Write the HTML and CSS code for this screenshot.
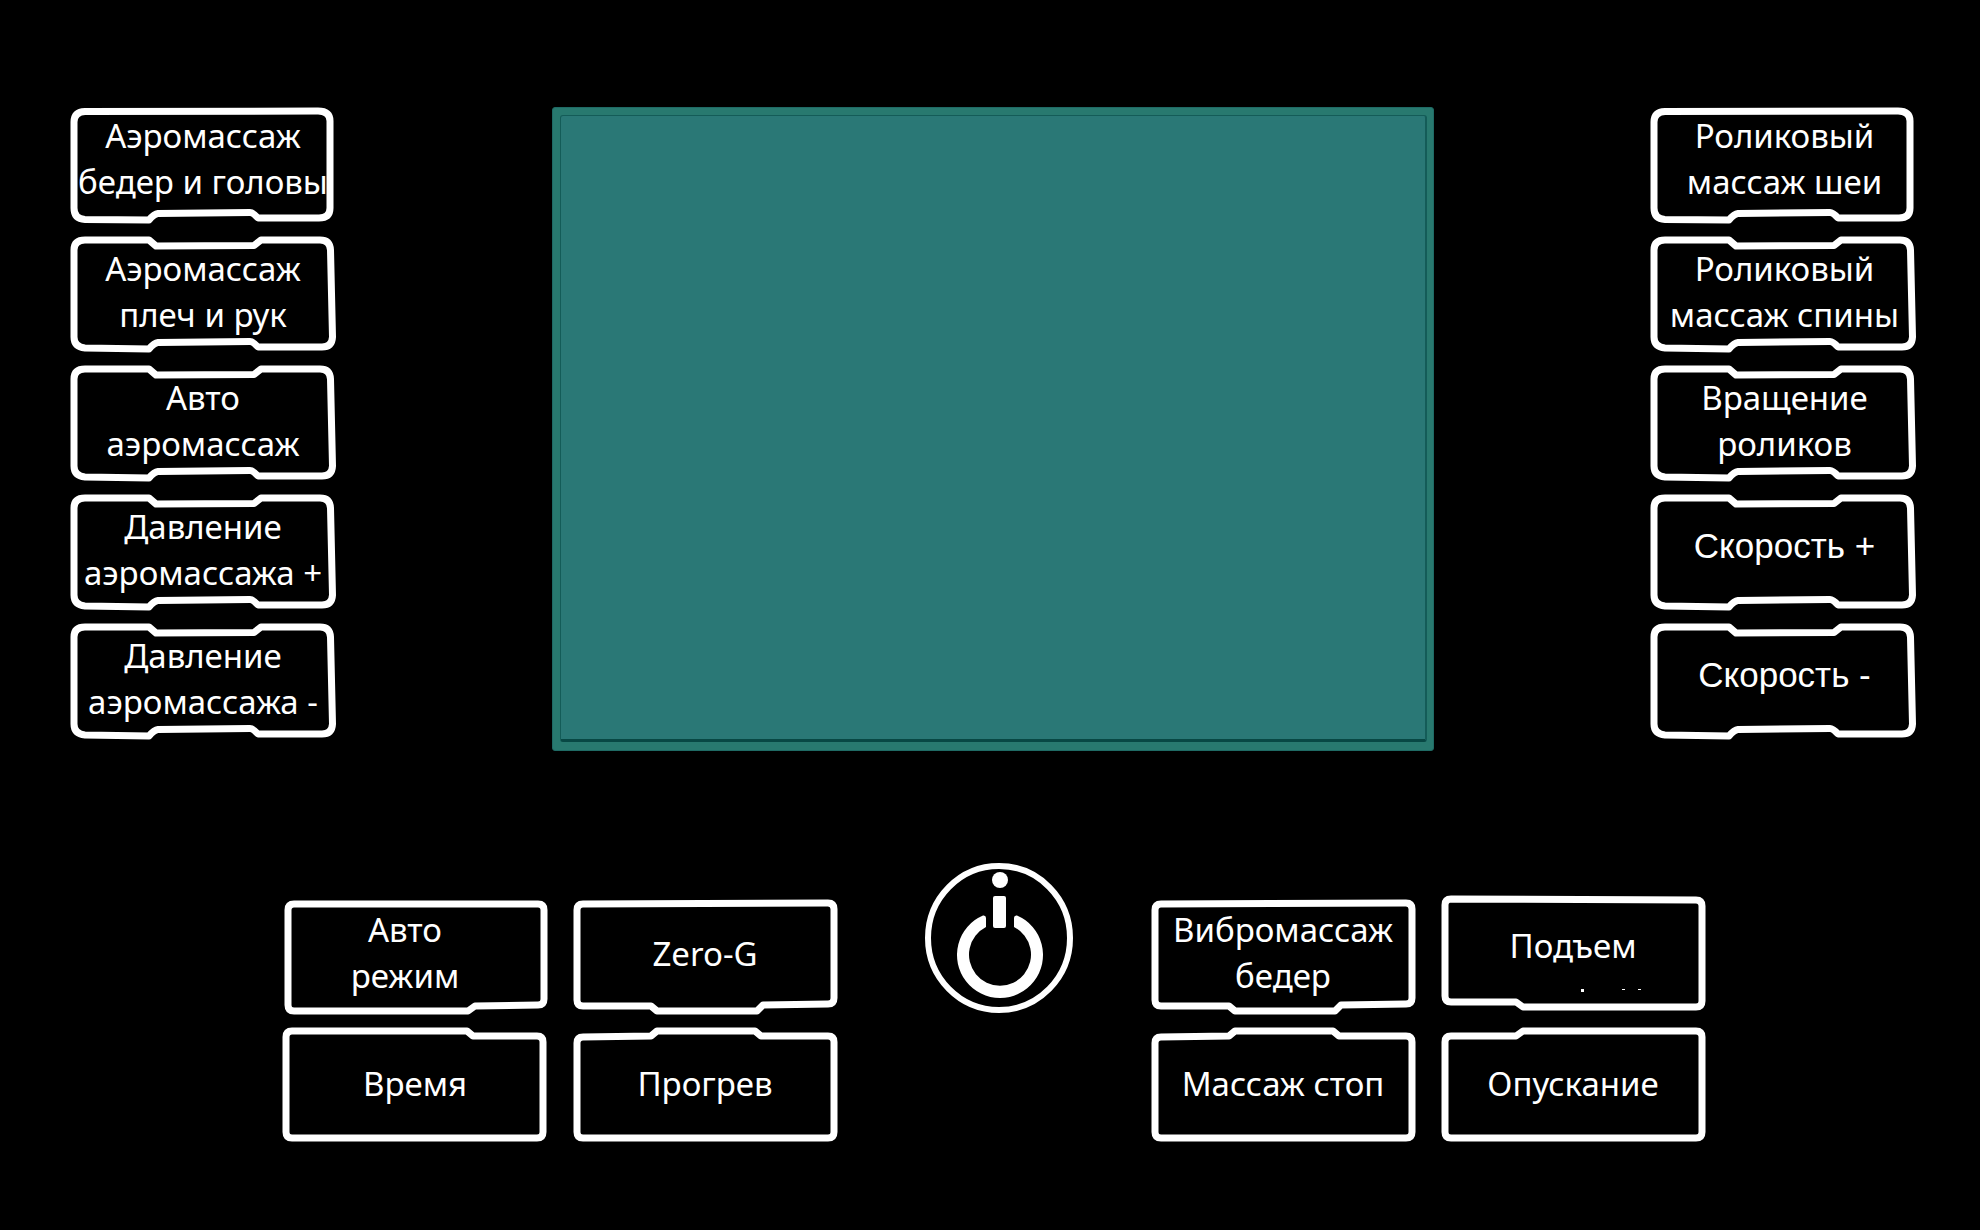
FILE: index.html
```html
<!DOCTYPE html>
<html lang="ru">
<head>
<meta charset="utf-8">
<title>Пульт массажного кресла</title>
<meta name="viewport" content="width=device-width, initial-scale=1">
<link rel="stylesheet" href="styles.css">
</head>
<body>
<svg class="sprite" aria-hidden="true">
  <symbol id="side-first" viewBox="0 0 266 117">
    <path d="M15 4.5 248 4Q260 4 260 14V101Q260 111 249 111H188Q183 105.5 180 105.5L88 106.5Q84 107 79 113L15 112.500Q4 112 4 101V15Q4 5 15 4.500Z"/>
  </symbol>
  <symbol id="side" viewBox="0 0 266 117">
    <path d="M15 4H79L86 10 184 9.500 191 4H250Q260 4 260.500 14L262.500 101Q262 111 252 111H188Q183 105.500 180 105.500L88 106.500Q84 107 79 113L15 112Q4 111 4 101V14Q4 4 15 4Z"/>
  </symbol>
  <symbol id="tab-left-up" viewBox="0 0 266 120">
    <path d="M12 9H256Q262 9 262 15V104Q262 110 256 110L193 111 186 116H12Q6 116 6 110V15Q6 9 12 9Z"/>
  </symbol>
  <symbol id="tab-left-down" viewBox="0 0 266 115">
    <path d="M10 4H185L191 9H255Q261 9 261 15V105Q261 111 255 111H10Q4 111 4 105V10Q4 4 10 4Z"/>
  </symbol>
  <symbol id="tab-mid-up" viewBox="0 0 266 120">
    <path d="M11 9 256 8Q262 8 262 14V103Q262 109 256 109L191 110 185 116H85L79 111H11Q5 111 5 105V15Q5 9 11 9Z"/>
  </symbol>
  <symbol id="tab-mid-down" viewBox="0 0 266 115">
    <path d="M11 10 79 9 85 4H183L189 9H256Q262 9 262 15V105Q262 111 256 111H11Q5 111 5 105V16Q5 10 11 10Z"/>
  </symbol>
  <symbol id="tab-right-up" viewBox="0 0 266 120">
    <path d="M11 4 256 5Q262 5 262 11V106Q262 112 256 112H83L76 107H11Q5 107 5 101V10Q5 4 11 4Z"/>
    <path class="mark" d="M141 94h3v3h-3zM182 94h3v1h-3zM198 94h3v1h-3z"/>
  </symbol>
  <symbol id="tab-right-down" viewBox="0 0 266 115">
    <path d="M11 9H76L83 4H256Q262 4 262 10V105Q262 111 256 111H11Q5 111 5 105V15Q5 9 11 9Z"/>
  </symbol>
</svg>

<main class="remote">
  <section class="upper">
    <div class="side-keys">
      <button class="key key-first" type="button"><svg class="frame"><use href="#side-first"/></svg><span class="label">Аэромассаж<br>бедер и головы</span></button>
      <button class="key" type="button"><svg class="frame"><use href="#side"/></svg><span class="label">Аэромассаж<br>плеч и рук</span></button>
      <button class="key" type="button"><svg class="frame"><use href="#side"/></svg><span class="label">Авто<br>аэромассаж</span></button>
      <button class="key" type="button"><svg class="frame"><use href="#side"/></svg><span class="label">Давление<br>аэромассажа +</span></button>
      <button class="key" type="button"><svg class="frame"><use href="#side"/></svg><span class="label">Давление<br>аэромассажа -</span></button>
    </div>
    <div class="screen"><div class="screen-inner"></div></div>
    <div class="side-keys side-keys-right">
      <button class="key key-first" type="button"><svg class="frame"><use href="#side-first"/></svg><span class="label">Роликовый<br>массаж шеи</span></button>
      <button class="key" type="button"><svg class="frame"><use href="#side"/></svg><span class="label">Роликовый<br>массаж спины</span></button>
      <button class="key" type="button"><svg class="frame"><use href="#side"/></svg><span class="label">Вращение<br>роликов</span></button>
      <button class="key key-speed" type="button"><svg class="frame"><use href="#side"/></svg><span class="label">Скорость +</span></button>
      <button class="key key-speed" type="button"><svg class="frame"><use href="#side"/></svg><span class="label">Скорость -</span></button>
    </div>
  </section>

  <section class="lower">
    <div class="key-block">
      <button class="key key-tall key-shifted" type="button"><svg class="frame"><use href="#tab-left-up"/></svg><span class="label">Авто<br>режим</span></button>
      <button class="key key-tall key-single" type="button"><svg class="frame"><use href="#tab-mid-up"/></svg><span class="label">Zero-G</span></button>
      <button class="key key-low" type="button"><svg class="frame"><use href="#tab-left-down"/></svg><span class="label">Время</span></button>
      <button class="key key-low" type="button"><svg class="frame"><use href="#tab-mid-down"/></svg><span class="label">Прогрев</span></button>
    </div>
    <button class="power" type="button" aria-label="Питание">
      <svg class="power-icon" viewBox="0 0 150 152" aria-hidden="true">
        <ellipse class="power-ring" cx="75" cy="76" rx="71" ry="72"/>
        <circle cx="76" cy="18" r="8"/>
        <rect x="69" y="34" width="13" height="32" rx="2"/>
        <path transform="translate(76 93)" d="M-17-39.5A43 43 0 1 0 17-39.5Q14-40 14-37V-28A31 31 0 1 1-14-28V-37Q-14-40-17-39.5Z"/>
      </svg>
    </button>
    <div class="key-block">
      <button class="key key-tall" type="button"><svg class="frame"><use href="#tab-mid-up"/></svg><span class="label">Вибромассаж<br>бедер</span></button>
      <button class="key key-tall key-raised" type="button"><svg class="frame"><use href="#tab-right-up"/></svg><span class="label">Подъем</span></button>
      <button class="key key-low" type="button"><svg class="frame"><use href="#tab-mid-down"/></svg><span class="label">Массаж стоп</span></button>
      <button class="key key-low" type="button"><svg class="frame"><use href="#tab-right-down"/></svg><span class="label">Опускание</span></button>
    </div>
  </section>
</main>
</body>
</html>
```
FILE: styles.css
```css
* {
  box-sizing: border-box;
}

body {
  margin: 0;
  background: #000;
  color: #fff;
  font-family: "Noto Sans", sans-serif;
}

.sprite {
  display: none;
}

.remote {
  min-height: 100vh;
  padding: 107px 0 88px;
}

.upper {
  display: grid;
  grid-template-columns: 266px minmax(0, 882px) 266px;
  justify-content: space-between;
  align-items: start;
  padding: 0 64px 0 70px;
}

.side-keys {
  display: grid;
  gap: 12px;
}

/* Keys: the frame and the label share one grid cell */
.key {
  display: grid;
  width: 266px;
  height: 117px;
  padding: 0;
  border: 0;
  background: none;
  color: inherit;
  font-family: inherit;
  font-size: 33px;
  line-height: 46px;
  text-align: center;
  cursor: pointer;
}

.frame {
  grid-area: 1 / 1;
  width: 100%;
  height: 100%;
  fill: none;
  stroke: #fff;
  stroke-width: 7px;
  stroke-linejoin: round;
}

.mark {
  fill: #fff;
  stroke: none;
}

.label {
  grid-area: 1 / 1;
  padding-top: 10px;
  white-space: nowrap;
}

.key-first .label {
  padding-top: 6px;
}

.side-keys-right .label {
  padding-left: 3px;
}

.key-speed {
  font-family: "Liberation Sans", sans-serif;
  font-size: 35px;
}

.key-speed .label {
  padding-top: 29px;
}

.key-tall {
  height: 120px;
}

.key-low {
  height: 115px;
}

.key-tall .label {
  padding-top: 12px;
}

.key-low .label {
  padding-top: 34px;
}

.key-single .label {
  padding-top: 36px;
}

.key-raised .label {
  padding-top: 28px;
}

.key-shifted .label {
  padding-right: 20px;
}

.screen {
  aspect-ratio: 882 / 644;
  padding: 7px 6px 8px 7px;
  border: 1px solid #1f6a64;
  border-radius: 3px;
  background: #28796f;
}

.screen-inner {
  height: 100%;
  border: 1px solid #145c58;
  border-right-width: 2px;
  border-bottom: 3px solid #084844;
  border-radius: 3px;
  background: #2a7876;
}

.lower {
  display: grid;
  grid-template-columns: auto 1fr auto;
  align-items: start;
  margin-top: 111px;
  padding: 0 274px 0 282px;
}

.key-block {
  display: grid;
  grid-template-columns: 266px 266px;
  gap: 12px 24px;
  padding-top: 33px;
}

.power {
  justify-self: center;
  width: 150px;
  height: 152px;
  margin-left: 10px;
  padding: 0;
  border: 0;
  border-radius: 50%;
  background: none;
  cursor: pointer;
}

.power-icon {
  display: block;
  width: 100%;
  height: 100%;
  fill: #fff;
}

.power-ring {
  fill: none;
  stroke: #fff;
  stroke-width: 6px;
}
```
